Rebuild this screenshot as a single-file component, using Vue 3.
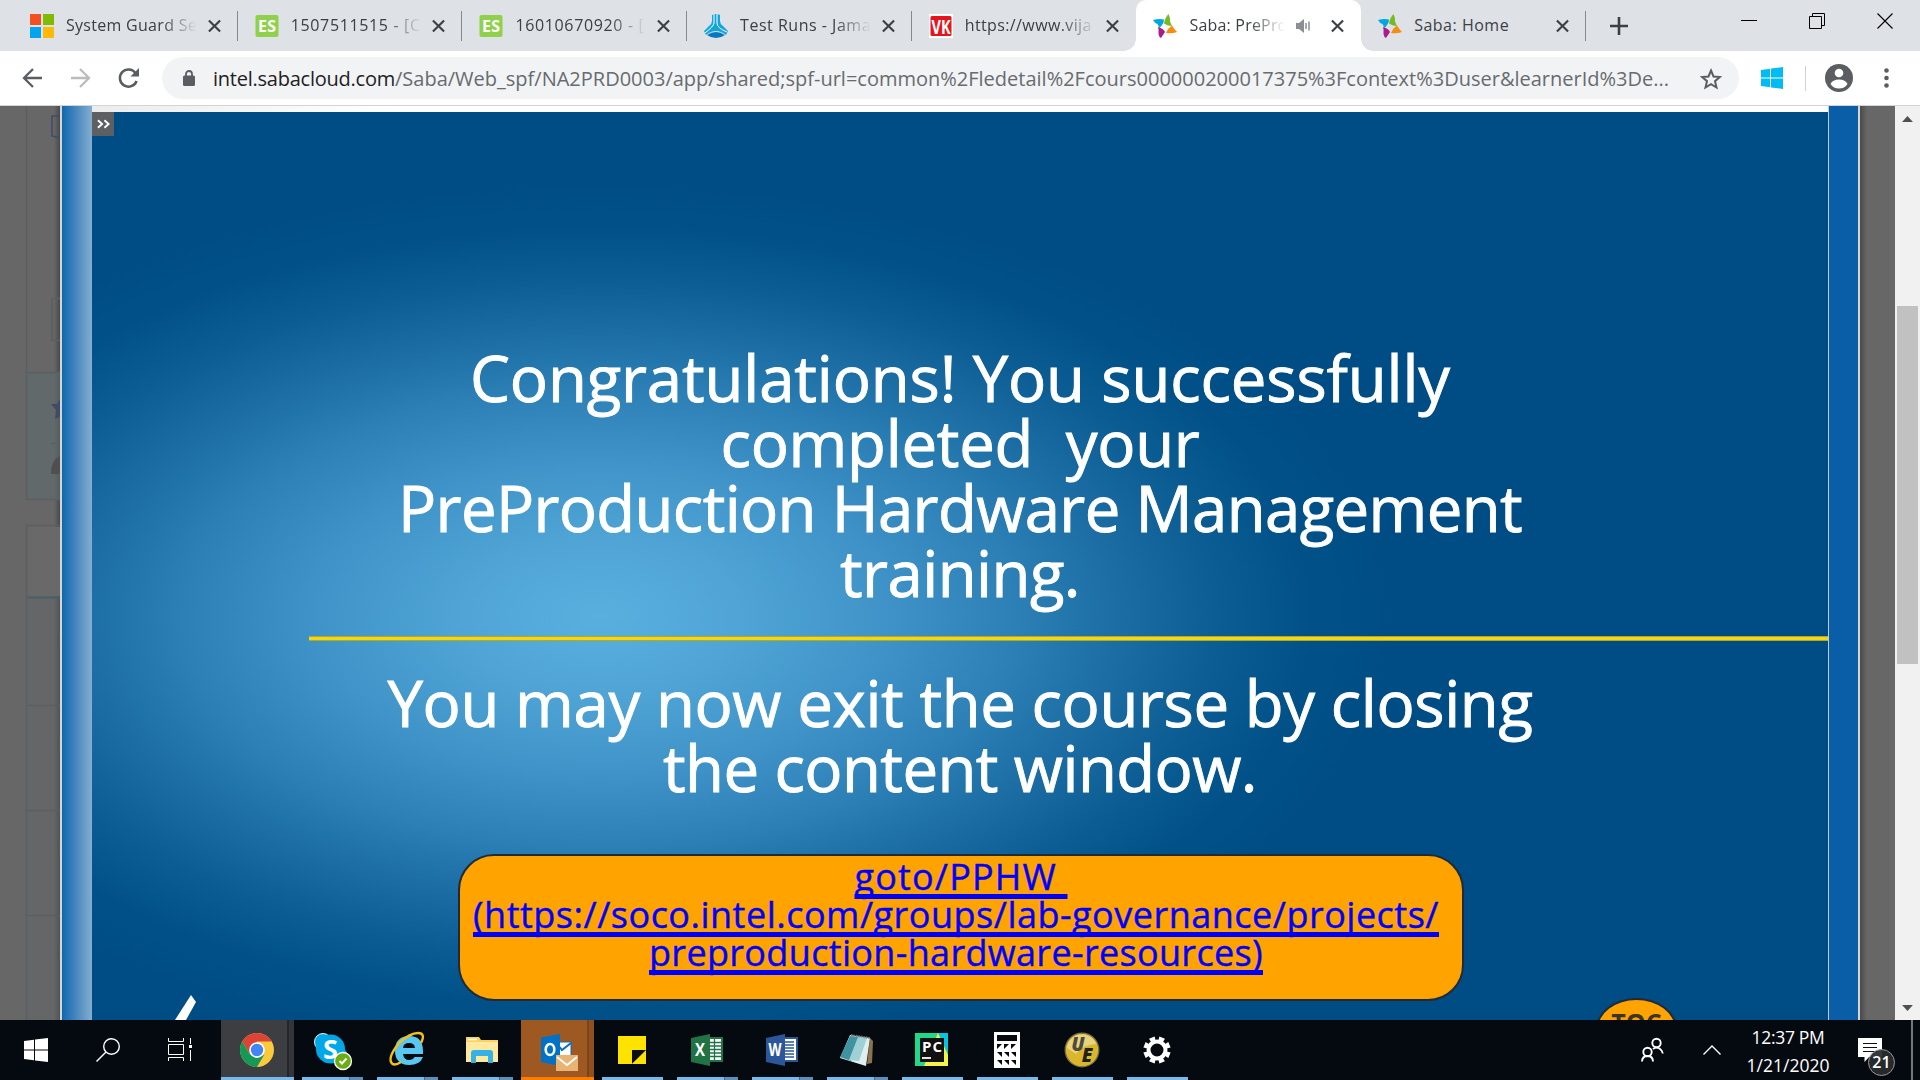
<script setup>
const tabs = [
  { icon: 'ms', title: 'System Guard Se', w: 131, fade: true },
  { icon: 'es', title: '1507511515 - [C', w: 130, fade: true },
  { icon: 'es', title: '16010670920 - [', w: 129, fade: true },
  { icon: 'jama', title: 'Test Runs - Jama', w: 131, fade: true },
  { icon: 'vk', title: 'https://www.vija', w: 127, fade: true },
  { icon: 'saba', title: 'Saba: PrePro', w: 98, fade: true, active: true, audio: true },
  { icon: 'saba', title: 'Saba: Home', w: 95 },
]

const apps = [
  { id: 'skype', stack: true },
  { id: 'ie', stack: true },
  { id: 'files', stack: true },
  { id: 'outlook', hot: true },
  { id: 'sticky' },
  { id: 'excel', stack: true },
  { id: 'word', stack: true },
  { id: 'notepad', stack: true },
  { id: 'pycharm' },
  { id: 'calc' },
  { id: 'ue' },
  { id: 'gear' },
]

const teeth = [0, 45, 90, 135, 180, 225, 270, 315]

// Tracks a line of text out to the given width.
const vFit = {
  mounted(el, { value }) {
    const range = document.createRange()
    range.selectNodeContents(el)
    const natural = range.getBoundingClientRect().width
    el.style.letterSpacing = (value - natural) / el.textContent.length + 'px'
  },
}
</script>

<template>
  <div class="screen">
    <header class="strip">
      <div v-for="(t, i) in tabs" :key="i" class="tab" :class="{ active: t.active, bare: i === 4 || i === 5 }">
        <svg class="fav" viewBox="0 0 24 24">
          <g v-if="t.icon === 'ms'">
            <path fill="#f35022" d="M0 0h11v11H0z" /><path fill="#80bb03" d="M13 0h11v11H13z" />
            <path fill="#03a5f0" d="M0 13h11v11H0z" /><path fill="#ffba08" d="M13 13h11v11H13z" />
          </g>
          <g v-else-if="t.icon === 'es'">
            <rect x=".5" y="1" width="23" height="22" rx="2" fill="#8fd14a" />
            <text x="12" y="18" text-anchor="middle" font-size="16" font-weight="700" fill="#fff" textLength="18">ES</text>
          </g>
          <g v-else-if="t.icon === 'jama'">
            <path fill="#12a5df" d="M8 1q4-2 8 0v6q0 3 3 5l5 5-2 4q-5-4-10-4T2 21l-2-4 5-5q3-2 3-5z" />
            <path fill="#0878bd" d="M3 21q9-6 18 0-4 3-9 3t-9-3z" />
            <path fill="none" stroke="#fff" stroke-width="1" d="M10 0v9q0 3-9 10M13 0v9q0 5 10 9" />
          </g>
          <g v-else-if="t.icon === 'vk'">
            <path fill="#fff" d="M0 0h24v24H0z" /><rect x="1.5" y="2" width="21" height="20" rx="1.5" fill="#e5151d" />
            <text x="12" y="19.500" text-anchor="middle" font-size="20" font-weight="700" fill="#fff" textLength="19" lengthAdjust="spacingAndGlyphs">VK</text>
          </g>
          <g v-else>
            <path fill="#75bc21" d="M15.500 0q2 4 1.500 7.500l2 4.500q-4 0-8-2.500 1-6 4.500-9.500z" />
            <path fill="#00a7e5" d="M0 6q6-1.500 11-.5 0 4-4.500 8.500L4.500 10Q1.500 9 0 6z" />
            <path fill="#f68d0e" d="M13 19q2-5 6-7.500Q21 15 24 18q-5 2-11 1z" />
            <path fill="#a81c8c" d="M5 13q6 2 7 5-2 3-4 6-2-1-2.500-4 .5-4-.5-7z" />
          </g>
        </svg>
        <span class="title" :class="{ fade: t.fade, short: t.audio }"><span v-fit="t.w">{{ t.title }}</span></span>
        <svg v-if="t.audio" class="audio" viewBox="0 0 15 14"><path fill="#8b8e92" d="M0 4h3l5-4v14L3 10H0z" /><path fill="none" stroke="#8b8e92" stroke-width="1.500" d="M10 4v6M13 2.500v9" /></svg>
        <svg class="x" viewBox="0 0 14 14"><path stroke="#3c4043" stroke-width="2.300" d="M1 1l12 12M13 1L1 13" /></svg>
      </div>
      <svg class="plus" viewBox="0 0 18 18"><path stroke="#3c4043" stroke-width="2.600" d="M9 0v18M0 9h18" /></svg>
      <div class="winctl">
        <svg viewBox="0 0 16 16"><path stroke="#000" d="M0 7.500h16" /></svg>
        <svg viewBox="0 0 16 16"><path fill="none" stroke="#000" d="M.5 3.500h12v12H.5zM3.500 3.500v-3h12v12h-3" /></svg>
        <svg viewBox="0 0 16 16"><path stroke="#000" stroke-width="1.100" d="M.5 .5l15 15M15.500 .5l-15 15" /></svg>
      </div>
    </header>

    <div class="toolbar">
      <svg class="nav" viewBox="0 0 20 20"><path fill="none" stroke="#5a5d61" stroke-width="2.300" d="M20 10H2M11 1l-9 9 9 9" /></svg>
      <svg class="nav fwd" viewBox="0 0 20 20"><path fill="none" stroke="#babcbe" stroke-width="2.300" d="M0 10h18M9 1l9 9-9 9" /></svg>
      <svg class="nav re" viewBox="0 0 22 20"><path fill="none" stroke="#5a5d61" stroke-width="2.500" d="M17.500 5A8.600 8.600 0 1 0 18.600 13" /><path fill="#5a5d61" d="M21 0v8.500h-8.500z" /></svg>
      <div class="omni">
        <svg class="lock" viewBox="0 0 12 16"><rect y="5.500" width="12" height="10.500" rx="1.500" fill="#5a5d61" /><path fill="none" stroke="#5a5d61" stroke-width="1.800" d="M3 6V4a3 3 0 0 1 6 0v2" /></svg>
        <span class="url"><b v-fit="182">intel.sabacloud.com</b><span v-fit="1274">/Saba/Web_spf/NA2PRD0003/app/shared;spf-url=common%2Fledetail%2Fcours000000200017375%3Fcontext%3Duser&amp;learnerId%3De...</span></span>
        <svg class="star" viewBox="0 0 22 21"><path fill="none" stroke="#5a5d61" stroke-width="2" d="M11 2.500l2.500 6 6.300.5-4.800 4.200 1.500 6.300-5.500-3.400-5.500 3.400L7 13.200 2.200 9l6.300-.5z" /></svg>
      </div>
      <svg class="win" viewBox="0 0 22 22"><path fill="#00bcf2" d="M0 3l9-1.200v8.700H0zM10 1.600L22 0v10.500H10zM0 11.500h9v8.700L0 19zM10 11.500h12V22l-12-1.600z" /></svg>
      <i class="rule"></i>
      <svg class="me" viewBox="0 0 28 28"><circle cx="14" cy="14" r="14" fill="#5a5d61" /><circle cx="14" cy="9" r="4.300" fill="#fff" /><path fill="#fff" d="M5.500 20q2-4.500 8.500-4.500t8.500 4.500q-3 4.500-8.500 4.500T5.500 20z" /></svg>
      <svg class="dots" viewBox="0 0 5 20"><circle cx="2.500" cy="2.500" r="2.300" /><circle cx="2.500" cy="10" r="2.300" /><circle cx="2.500" cy="17.500" r="2.300" /></svg>
    </div>

    <main class="page">
      <svg class="under" viewBox="0 0 60 914">
        <path fill="#5f6569" opacity=".35" d="M27 492h33v422H27z" />
        <path fill="#5d6b6d" opacity=".6" d="M27 266h33v127H27z" />
        <path fill="#696969" d="M29 421h31v69H29z" />
        <path fill="none" stroke="#5b5f62" stroke-width="1.500" d="M26.500 0v393.500H60M26.500 266.500H60M51 337.500h9M60 419.500H26.500V914M27 599.500h33M27 704.500h33M27 809.500h33M60 192.500h-8v42h8" />
        <path fill="none" stroke="#3f4b6b" stroke-width="1.500" d="M60 10h-8v20l8 2" />
        <path stroke="#456069" stroke-width="2" d="M27 491.500h33" />
        <path fill="#434a63" d="M51 298h6l3-5v18l-5 2 1-9z" />
        <path fill="#4f4f4f" d="M51 368q0-14 9-18v18z" />
        <path fill="none" stroke="#575650" stroke-width="2" d="M60 525q-3 7 0 14M60 629q-3 7 0 14M60 734q-3 7 0 14M60 840q-3 7 0 14" />
      </svg>
      <section class="player">
        <div class="rail"></div>
        <div class="stage">
          <div class="gap"></div>
          <div class="slide">
            <button class="toggle"><svg viewBox="0 0 14 10"><path fill="none" stroke="#fff" stroke-width="2" d="M1 1l4.500 4L1 9M8 1l4.500 4L8 9" /></svg></button>
            <h1>
              <span v-fit="980">Congratulations! You successfully</span>
              <span v-fit="479">{{ 'completed\u00a0 your' }}</span>
              <span v-fit="1124">PreProduction Hardware Management</span>
              <span v-fit="240">training.</span>
            </h1>
            <hr>
            <h2>
              <span v-fit="1145">You may now exit the course by closing</span>
              <span v-fit="594">the content window.</span>
            </h2>
            <a class="cta">
              <span v-fit="213" class="first">{{ 'goto/PPHW ' }}</span>
              <span v-fit="966">(https://soco.intel.com/groups/lab-governance/projects/</span>
              <span v-fit="614">preproduction-hardware-resources)</span>
            </a>
            <svg class="tick" viewBox="0 0 22 25"><path fill="#fff" d="M0 25L16 0l5 7-10 18z" /></svg>
            <div class="toc">TOC</div>
          </div>
        </div>
        <div class="rail right"></div>
      </section>
      <div class="shade"></div>
      <div class="bar">
        <svg viewBox="0 0 9 5"><path fill="#505050" d="M0 5L4.500 0 9 5z" /></svg>
        <div class="thumb"></div>
        <svg viewBox="0 0 9 5"><path fill="#505050" d="M0 0h9L4.500 5z" /></svg>
      </div>
    </main>

    <footer class="task">
      <div class="sys"><svg width="24" height="24" viewBox="0 0 24 24"><path fill="#fff" d="M0 3l10-1.200v9.700H0zM11 1.600L24 0v11.500H11zM0 12.500h10v9.700L0 21zM11 12.500h13V24l-13-1.600z" /></svg></div>
      <div class="sys"><svg width="24" height="24" viewBox="0 0 24 24"><circle cx="15.500" cy="8.500" r="7.800" fill="none" stroke="#fff" stroke-width="1.400" /><path stroke="#fff" stroke-width="1.500" d="M10 14L.5 23.500" /></svg></div>
      <div class="sys"><svg width="24" height="24" viewBox="0 0 24 24"><path fill="none" stroke="#fff" d="M.5 0v3.500h15V0M.5 6.500h15v10H.5zM.5 23v-3.500h15V23M22.500 0v6M22.500 12v11" /><path fill="#fff" d="M21 7h3v3h-3z" /></svg></div>
      <div class="chrome">
        <svg width="34" height="34" viewBox="0 0 34 34">
          <circle cx="17" cy="17" r="17" fill="#fbc93c" />
          <path fill="#db4437" d="M2.300 8.500A17 17 0 0 1 31.700 8.500H17L9.600 21z" />
          <path fill="#159956" d="M2.300 8.500A17 17 0 0 0 17 34l7.400-12.500L17 25l-7.400-4z" />
          <circle cx="17" cy="17" r="7.800" fill="#fff" /><circle cx="17" cy="17" r="6.200" fill="#4285f4" />
        </svg>
      </div>
      <div v-for="a in apps" :key="a.id" class="app" :class="{ stack: a.stack, hot: a.hot }">
        <svg width="40" height="40" viewBox="0 0 40 40">
          <g v-if="a.id === 'skype'">
            <circle cx="11" cy="12" r="8.500" fill="#00a8e8" stroke="#dff3fb" /><circle cx="26" cy="25" r="9" fill="#00a8e8" /><circle cx="18.500" cy="19" r="14.500" fill="#00a8e8" />
            <text x="18.500" y="29" text-anchor="middle" font-size="27" font-weight="700" fill="#fff">S</text>
            <circle cx="31" cy="31" r="8.500" fill="#6bad13" stroke="#fff" stroke-width="1.300" /><path fill="none" stroke="#fff" stroke-width="2" d="M27.500 31l2.500 2.500 4.500-5" />
          </g>
          <g v-else-if="a.id === 'ie'">
            <path fill="#58c8f2" fill-rule="evenodd" d="M36 24H16q1 6 6 6 4 0 5.500-3h8.500q-3 8-14 8Q8 34.500 8 20.500T22 6Q36 6 36 21zM16 18h12q-.5-5-6-5t-6 5z" />
            <path fill="none" stroke="#f5c014" stroke-width="2.400" d="M34 13q5-10-3-10T12 13Q0 28 5 33.500 8 36 14 32" />
          </g>
          <g v-else-if="a.id === 'files'">
            <path fill="#ffd35b" d="M4 7h13l2 3h17v22H4z" /><path fill="#ffe9a0" d="M4 12h32v20H4z" /><path stroke="#fff" stroke-width="1.500" d="M6 9.500h9" /><path fill="#35b1e8" d="M9 33V23q0-3 3-3h16q3 0 3 3v10h-5v-7H14v7z" />
          </g>
          <g v-else-if="a.id === 'outlook'">
            <path fill="#fff" stroke="#0a6fc4" d="M19 12h15v18H19z" /><path fill="none" stroke="#0a6fc4" stroke-width="2" d="M21 15l4 5 9-7" /><path fill="#0072c6" d="M4 7.500L23 4v32L4 32z" />
            <ellipse cx="13" cy="19.500" rx="4.300" ry="5.500" fill="none" stroke="#fff" stroke-width="2.600" />
            <path fill="#e8b373" d="M19 25h22v16H19z" /><path fill="none" stroke="#fff" stroke-width="1.800" d="M20 27l10 8 10-8" />
          </g>
          <g v-else-if="a.id === 'sticky'">
            <path fill="#ffe300" d="M6 6h28v28H6z" /><path fill="#0b0f10" d="M20 34V20h14z" /><path fill="#ffe300" d="M20 34h14V21z" />
          </g>
          <g v-else-if="a.id === 'excel' || a.id === 'word'" :fill="a.id === 'excel' ? '#217346' : '#2b579a'">
            <path d="M20 7h16v25H20z" /><path fill="#fff" d="M22 9h12v21H22z" />
            <path v-if="a.id === 'excel'" stroke="#217346" stroke-width="1.300" d="M22 12.500h12M22 16h12M22 19.500h12M22 23h12M22 26.500h12M27.500 9v21" />
            <path v-else stroke="#2b579a" stroke-width="1.300" d="M22 12h10M22 15h10M22 18h10M22 21h10M22 24h10M22 27h10" />
            <path d="M4 8l19-4v32L4 32z" /><text x="13" y="26" text-anchor="middle" font-size="17" font-weight="700" fill="#fff" :textLength="a.id === 'excel' ? 10 : 13" lengthAdjust="spacingAndGlyphs">{{ a.id === 'excel' ? 'X' : 'W' }}</text>
          </g>
          <g v-else-if="a.id === 'notepad'">
            <path fill="#8a734c" d="M33 8l3 3-1 22-5 1z" /><path fill="#dfeff0" d="M13 5l20 3-4 28-26-8z" /><path fill="#3f93a1" d="M13 6l9 1-8 24-11-4z" /><path fill="#9fd0d6" d="M21 7l9 1-8 23-10-1z" /><path stroke="#777" stroke-width="2" stroke-dasharray="1.500 1" d="M14 5l19 3" />
          </g>
          <g v-else-if="a.id === 'pycharm'">
            <path fill="#21d789" d="M3 3h33v33H3z" /><path fill="#07c3df" d="M26 3h10v20z" /><path fill="#f4f14a" d="M26 3l10 22v11H12z" /><path fill="#111" d="M8 8h24v24H8z" />
            <text x="20" y="21.500" text-anchor="middle" font-size="15" font-weight="700" fill="#fff" textLength="20">PC</text><path fill="#e4e4e4" d="M10 27h9v2h-9z" />
          </g>
          <g v-else-if="a.id === 'calc'">
            <path fill="#fff" d="M7 2h26v36H7z" /><path fill="#060a10" d="M10 5h20v6H10zM10 14h5l-5 5zM17 14h5l-5 5zM24 14h5l-5 5zM10 22h5v5zM17 22h5v5zM24 22h5v5zM10 30h5v5zM17 30h5v5zM24 30h5v5z" />
          </g>
          <g v-else-if="a.id === 'ue'">
            <circle cx="20" cy="20" r="16.800" fill="#d9b62c" stroke="#77714e" stroke-width="1.300" /><path fill="#fff" opacity=".4" d="M5 18A15 15 0 0 1 34 14Q22 14 14 24z" />
            <text x="16" y="21" text-anchor="middle" font-size="19" font-weight="800" font-style="italic" fill="#4d4a3e">U</text><text x="25" y="31.500" text-anchor="middle" font-size="19" font-weight="800" font-style="italic" fill="#211f1a">E</text>
          </g>
          <g v-else>
            <circle cx="20" cy="20" r="8.500" fill="none" stroke="#fff" stroke-width="4" />
            <path v-for="r in teeth" :key="r" fill="#fff" d="M17 6.500h6l-.8 5h-4.400z" :transform="`rotate(${r + 22.5} 20 20)`" />
          </g>
        </svg>
      </div>
      <div class="tray">
        <svg width="23" height="24" viewBox="0 0 23 24"><g fill="none" stroke="#fff" stroke-width="1.900"><circle cx="15.500" cy="5" r="4.200" /><path d="M12 11q3-2.500 6.500-.5 3 2 3.300 5" /><circle cx="6.500" cy="14" r="4.200" /><path d="M1 23.500q.3-5.500 5.500-5.500t5.500 5.500" /></g></svg>
        <svg width="18" height="10" viewBox="0 0 18 10"><path fill="none" stroke="#fff" stroke-width="1.400" d="M.5 9.500L9 1l8.500 8.500" /></svg>
        <div class="clock"><span v-fit="73">12:37 PM</span><span v-fit="83">1/21/2020</span></div>
        <div class="note">
          <svg width="24" height="24" viewBox="0 0 24 24"><path fill="#fff" d="M0 0h24v19H11l-4.500 5v-5H0z" /><path stroke="#0b0f14" d="M5 5.500h14M5 9.500h14M5 13.500h14" /></svg>
          <b>21</b>
        </div>
        <i></i>
      </div>
    </footer>
  </div>
</template>

<style>
body { margin: 0; overflow: hidden; }
</style>

<style scoped>
* { box-sizing: border-box; }
.screen { width: 1920px; height: 1080px; display: flex; flex-direction: column; overflow: hidden; font-family: "Open Sans", "Noto Sans", sans-serif; }
svg { display: block; flex: none; overflow: visible; }
span { white-space: pre; }

.strip { height: 51px; flex: none; background: #dee1e6; display: flex; align-items: center; padding-left: 13px; position: relative; }
.tab { width: 224.700px; height: 51px; flex: none; display: flex; align-items: center; padding: 0 17px; position: relative; font-size: 16px; color: #3c4043; }
.tab::after { content: ""; position: absolute; right: 0; top: 11px; width: 1px; height: 30px; background: #85898e; }
.tab.bare::after { display: none; }
.tab.active { background: #fff; border-radius: 10px 10px 0 0; }
.tab.active::before { content: ""; position: absolute; left: -12px; right: -12px; bottom: 0; height: 12px; background: radial-gradient(circle at 0 0, transparent 11.500px, #fff 12px) left / 12px 12px no-repeat, radial-gradient(circle at 100% 0, transparent 11.500px, #fff 12px) right / 12px 12px no-repeat; }
.fav { width: 24px; height: 24px; margin-right: 12px; }
.title { width: 131px; overflow: hidden; line-height: 24px; margin-top: -2px; }
.title.short { width: 96px; }
.fade { -webkit-mask-image: linear-gradient(90deg, #000 calc(100% - 36px), transparent); mask-image: linear-gradient(90deg, #000 calc(100% - 36px), transparent); }
.audio { width: 15px; height: 14px; margin-left: 11px; }
.x { width: 13px; height: 14px; margin-left: auto; margin-right: 0; }
.plus { width: 18px; height: 18px; margin-left: 24px; }
.winctl { position: absolute; right: 27px; top: 13px; display: flex; gap: 52px; }
.winctl svg { width: 16px; height: 16px; }

.toolbar { height: 55px; flex: none; display: flex; align-items: center; background: #fff; border-bottom: 1px solid #d3d4d6; padding-left: 22px; }
.nav { width: 20px; height: 20px; }
.fwd { margin-left: 29px; }
.re { width: 22px; margin-left: 27px; }
.omni { width: 1577px; height: 42px; margin-left: 22px; border-radius: 21px; background: #f1f3f4; display: flex; align-items: center; padding: 0 17px 0 21px; }
.lock { width: 12px; height: 16px; }
.url { margin-left: 18px; padding-top: 2px; font-size: 20px; line-height: 40px; color: #686b6f; }
.url b { font-weight: 400; color: #1f2124; }
.star { width: 22px; height: 21px; margin-left: auto; }
.win { width: 22px; height: 22px; margin-left: 22px; }
.rule { width: 1px; height: 25px; background: #cfd1d4; margin: 0 19px 0 22px; }
.me { width: 28px; height: 28px; }
.dots { width: 5px; height: 20px; margin-left: 31px; fill: #5a5d61; }

.page { height: 914px; flex: none; display: flex; background: #676767; overflow: hidden; }
.under { width: 60px; height: 914px; background: linear-gradient(90deg, transparent 54px, #4a4a4a) #676767; }
.player { width: 1800px; display: flex; border: solid #d4d6d3; border-width: 0 2px; }
.rail { width: 30px; flex: none; background: linear-gradient(90deg, #1067ae, #84adcf); }
.rail.right { background: #0a5da7; border-left: 1px solid #b8cbdc; }
.stage { width: 1736px; }
.gap { height: 6px; background: linear-gradient(90deg, #ececec, #fff 300px); }
.slide { height: 908px; position: relative; overflow: hidden; padding-top: 233px; display: flex; flex-direction: column; background: #004c85 radial-gradient(ellipse 810px 445px at 508px 505px, #59b0df 0, #4fa4d5 18%, #3e92c7 36%, #2b7fb5 52%, #1b6da3 64%, #0b5d94 76%, #015188 88%, #004c85 100%); }
.toggle { position: absolute; left: 0; top: 0; width: 22px; height: 24px; padding: 0; border: 0; background: #5c6063; display: flex; align-items: center; justify-content: center; }
.toggle svg { width: 13px; height: 10px; }
h1, h2 { margin: 0 0 0 300px; width: 1136px; display: flex; flex-direction: column; align-items: center; color: #fff; font-size: 63.500px; line-height: 65px; font-weight: 400; -webkit-text-stroke: .9px #fff; }
hr { width: 1519px; height: 5px; margin: 31px 0 0 217px; border: 0; background: linear-gradient(#a5ab3b 1px, #f7d70b 1px, #f7d70b 4px, #a5ab3b 4px); flex: none; }
h2 { margin-top: 29px; }
.cta { width: 1006px; height: 147px; flex: none; margin: 54px 0 0 366px; border: 2.500px solid #202a3a; border-radius: 36px; background: #ffa300; display: flex; flex-direction: column; align-items: center; padding: 2px 10px 0 0; color: #00f; font-size: 36px; line-height: 38px; -webkit-text-stroke: .4px #00f; }
.cta span { text-decoration: underline; text-decoration-thickness: 5px; text-underline-offset: 4px; text-decoration-skip-ink: none; }
.cta .first { margin-left: 10px; }
.tick { position: absolute; left: 83px; bottom: 0; width: 22px; height: 25px; }
.toc { position: absolute; left: 1504px; top: 886px; width: 81px; height: 62px; border: 2px solid #202a3a; border-radius: 50%; background: #ffa300; color: #3d3428; font-size: 25px; font-weight: 700; line-height: 45px; text-align: center; }
.shade { width: 35px; background: linear-gradient(90deg, #4a4a4a, #676767 7px); }
.bar { width: 25px; background: #f1f1f1; display: flex; flex-direction: column; align-items: center; padding: 10px 0 9px; }
.bar svg { width: 11px; height: 6px; }
.thumb { width: 21px; height: 358px; background: #c1c1c1; margin: 184px 0 auto; }

.task { height: 60px; flex: none; display: flex; background: #050a11; }
.sys { width: 72px; display: flex; align-items: center; justify-content: center; }
.chrome { width: 73px; margin: 0 0 0 5px; display: flex; align-items: center; padding-left: 19px; background: linear-gradient(90deg, #3c3e42 66px, #242629 66px, #242629 68px, #333539 68px); border-bottom: 3px solid #76b9ed; }
.sys + .chrome svg { margin-top: 3px; }
.app { width: 61px; height: 60px; margin-left: 14px; padding-right: 2px; display: flex; align-items: center; justify-content: center; background: linear-gradient(#76b9ed, #76b9ed) bottom / 100% 3px no-repeat; }
.chrome + .app { margin-left: 8px; }
.app.stack { background-image: linear-gradient(90deg, #76b9ed 47px, #44698a 47px, #44698a 48px, #5c90ba 48px); }
.app.hot { width: 73px; margin: 0 -6px 0 8px; padding-right: 2px; background: linear-gradient(#ff7a00, #ff7a00) bottom / 100% 3px no-repeat, linear-gradient(90deg, #9e5922 66px, #7d4318 66px, #7d4318 68px, #8f4f1f 68px); }
.app.hot + .app { margin-left: 14px; }
.tray { margin-left: auto; width: 279px; display: flex; align-items: center; color: #fff; }
.tray > svg + svg { margin-left: 39px; }
.clock { width: 100px; margin-left: 17px; padding-top: 1px; display: flex; flex-direction: column; align-items: center; font-size: 17.500px; line-height: 28px; }
.note { margin-left: 20px; position: relative; }
.note b { position: absolute; left: 10px; top: 11px; width: 27px; height: 27px; border: 1px solid #9a9a9a; border-radius: 50%; background: #2a2c2ff0; font-size: 16px; font-weight: 600; line-height: 24px; text-align: center; }
.tray i { width: 2px; height: 60px; background: #73767a; margin-left: 29px; }
</style>
